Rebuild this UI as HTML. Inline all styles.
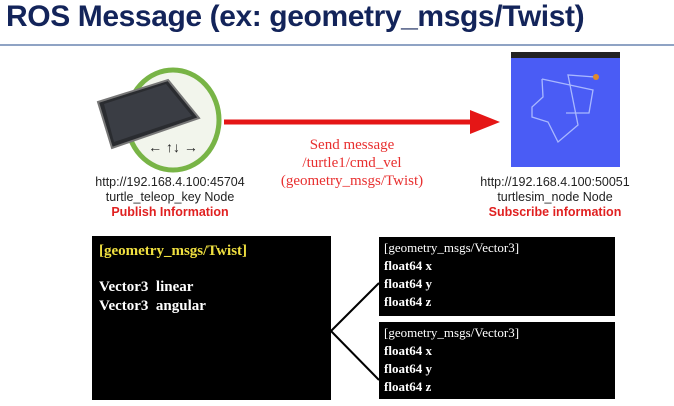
<!DOCTYPE html>
<html><head><style>
body{margin:0;width:674px;height:406px;background:#fff;position:relative;overflow:hidden;font-family:"Liberation Sans",sans-serif}
.a{position:absolute}
.t{left:6px;top:0px;font-size:30px;font-weight:bold;color:#13245a;letter-spacing:-0.4px}
.c{text-align:center;font-size:12.5px;color:#222;line-height:15px}
.r{color:#e02020;font-weight:bold}
.box{background:#000;color:#fff;font-family:"Liberation Serif",serif;font-weight:bold}
</style></head><body>
<div class="a t">ROS Message (ex: geometry_msgs/Twist)</div>
<div class="a" style="left:0;top:44px;width:674px;height:2px;background:#8fa3c4"></div>
<svg class="a" style="left:0;top:0" width="674" height="406">
<ellipse cx="173" cy="120" rx="46" ry="50" fill="#f2f5ec" stroke="#78b446" stroke-width="5"/>
<polygon points="98,102 168,80 199,118 112,148" fill="#2a2c30" stroke="#777" stroke-width="2"/>
<polygon points="104,104 166,84 192,116 114,142" fill="#3a3d44"/>
<text x="173" y="152" text-anchor="middle" font-size="14" fill="#222">← ↑↓ →</text>
<line x1="224" y1="122" x2="478" y2="122" stroke="#e51616" stroke-width="5"/>
<polygon points="470,110 500,122 470,134" fill="#e51616"/>
<rect x="511" y="52" width="109" height="115" fill="#4a5cf5"/>
<rect x="511" y="52" width="109" height="6" fill="#222"/>
<polyline points="542,79 593,90 589,113 566,113" fill="none" stroke="#a9b8ff" stroke-width="1.3"/>
<polyline points="595,77 568,75 578,125 558,142 548,122 532,117 532,107 543,97 542,79" fill="none" stroke="#a9b8ff" stroke-width="1.3"/>
<circle cx="596" cy="77" r="3" fill="#e08a2a"/>
<line x1="331" y1="331" x2="379" y2="283" stroke="#000" stroke-width="2"/>
<line x1="331" y1="331" x2="379" y2="380" stroke="#000" stroke-width="2"/>
</svg>
<div class="a c" style="left:70px;top:175px;width:200px">http://192.168.4.100:45704<br>turtle_teleop_key Node<br><span class="r">Publish Information</span></div>
<div class="a c" style="left:455px;top:175px;width:200px">http://192.168.4.100:50051<br>turtlesim_node Node<br><span class="r">Subscribe information</span></div>
<div class="a" style="left:252px;top:136px;width:200px;text-align:center;font-family:'Liberation Serif',serif;font-size:15px;line-height:18px;color:#e83030">Send message<br>/turtle1/cmd_vel<br>(geometry_msgs/Twist)</div>
<div class="a box" style="left:92px;top:236px;width:239px;height:164px;font-size:15px;line-height:19px">
<div style="padding:6px 0 0 7px;color:#f0e040">[geometry_msgs/Twist]</div>
<div style="padding:17px 0 0 7px">Vector3&nbsp; linear<br>Vector3&nbsp; angular</div></div>
<div class="a box" style="left:379px;top:237px;width:236px;height:79px;font-size:13px;line-height:18px;padding:0"><div style="padding:2px 0 0 5px;font-weight:normal">[geometry_msgs/Vector3]</div><div style="padding-left:5px">float64 x<br>float64 y<br>float64 z</div></div>
<div class="a box" style="left:379px;top:322px;width:236px;height:77px;font-size:13px;line-height:18px"><div style="padding:2px 0 0 5px;font-weight:normal">[geometry_msgs/Vector3]</div><div style="padding-left:5px">float64 x<br>float64 y<br>float64 z</div></div>
</body></html>
